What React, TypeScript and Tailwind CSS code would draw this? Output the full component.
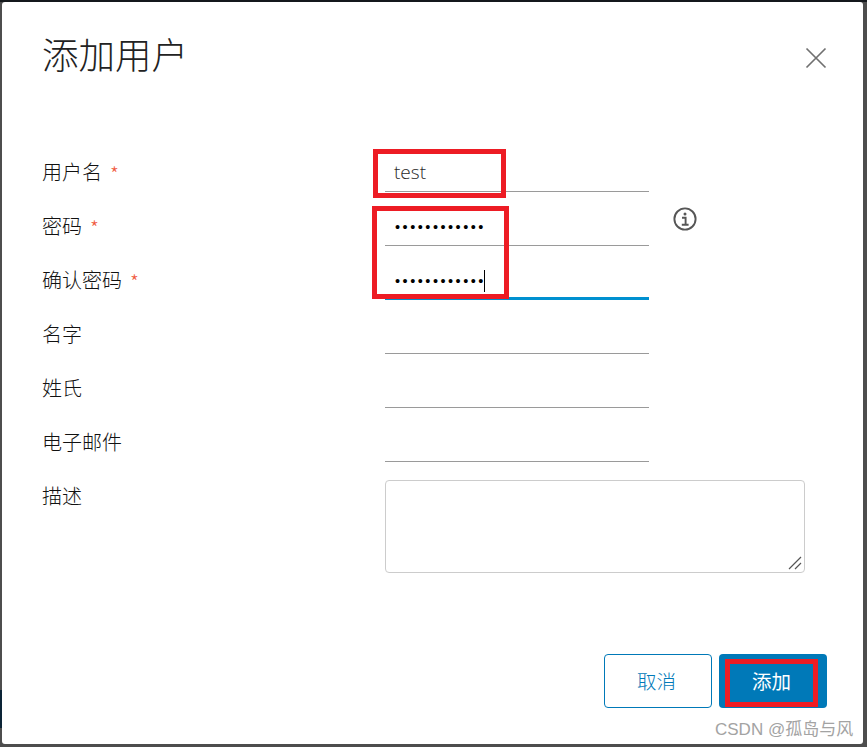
import React from 'react';

const fontStack = { fontFamily: '"Noto Sans CJK SC", "Noto Sans", sans-serif' };

const Field = ({
  label,
  required,
  focused,
  children,
}: {
  label: string;
  required?: boolean;
  focused?: boolean;
  children?: React.ReactNode;
}) => (
  <div className="flex h-[54px] items-start">
    <div className="ml-[-1px] flex w-[343px] pt-[20px] text-[20px] leading-[28px] font-light text-[#111]">
      {label}
      {required && <span className="ml-[8px] mt-[4px] text-[20px] leading-[24px] text-[#f0583c]">*</span>}
    </div>
    <div
      className={
        focused
          ? 'flex h-[54px] w-[264px] items-center border-b-[3px] border-[#0090d0] pl-[9px] pt-[19px]'
          : 'flex h-[54px] w-[264px] items-center border-b border-[#9a9a9a] pl-[9px] pt-[17px]'
      }
    >
      {children}
    </div>
  </div>
);

const Dots = () => (
  <span className="ml-[1px] text-[14.5px] leading-none tracking-[2.5px] text-black" style={{ fontFamily: '"Liberation Sans", sans-serif' }}>
    ••••••••••••
  </span>
);

export default function App() {
  return (
    <div className="relative h-[747px] w-[867px] overflow-hidden border-t-2 border-[#14181c] bg-[#4d4d4d]" style={fontStack}>
      <div className="absolute left-0 top-[688px] h-[38px] w-[2px] bg-[#0c2436]" />

      <div className="relative mx-[2px] flex h-[742px] w-[861px] flex-col rounded-[3px] bg-white pl-[41px]">
        <div className="flex h-[114px] items-start justify-between pr-[35px]">
          <h1 className="ml-[-1px] pt-[26px] text-[36.5px] leading-[52px] font-light text-[#222]">添加用户</h1>
          <svg width="24" height="24" viewBox="0 0 24 24" className="mt-[44px] text-[#707070]" fill="none" stroke="currentColor" strokeWidth="1.7">
            <path d="M2.5 2.5 L21.5 21.5 M21.5 2.5 L2.5 21.5" />
          </svg>
        </div>

        <div className="pt-[22px]">
          <Field label="用户名" required>
            <span className="mt-[-2px] text-[19px] leading-none text-[#2a2a2a]" style={{ fontFamily: '"Open Sans", sans-serif', fontWeight: 300 }}>test</span>
          </Field>
          <div className="flex items-start">
            <Field label="密码" required>
              <Dots />
            </Field>
            <svg width="24" height="24" viewBox="0 0 24 24" className="ml-[24px] mt-[15px] text-[#565656]" fill="none" stroke="currentColor">
              <circle cx="12" cy="12" r="10.6" strokeWidth="1.9" />
              <circle cx="12" cy="7" r="1.5" fill="currentColor" stroke="none" />
              <path d="M9 10.8 H12.6 V17.6 M8.8 17.8 H15.6" strokeWidth="1.9" />
            </svg>
          </div>
          <Field label="确认密码" required focused>
            <Dots />
            <span className="ml-[-2px] h-[22px] w-px bg-black" />
          </Field>
          <Field label="名字" />
          <Field label="姓氏" />
          <Field label="电子邮件" />

          <div className="flex items-start pt-[18px]">
            <div className="ml-[-1px] w-[343px] pt-[2px] text-[20px] leading-[28px] font-light text-[#111]">描述</div>
            <div className="relative h-[93px] w-[420px] rounded-[4px] border border-[#cccccc]">
              <svg width="14" height="14" viewBox="0 0 14 14" className="absolute bottom-[2px] right-[2px] text-[#555]" fill="none" stroke="currentColor" strokeWidth="1.2">
                <path d="M1 13 L13 1 M7 13 L13 7" />
              </svg>
            </div>
          </div>
        </div>

        <div className="mt-[81px] flex justify-end gap-[7px] pr-[36px]">
          <button className="h-[54px] w-[108px] rounded-[4px] border border-[#0079b8] bg-white pr-[3px] text-[19.5px] font-light text-[#0079b8]">取消</button>
          <button className="h-[54px] w-[108px] rounded-[4px] bg-[#0079b8] pr-[3px] text-[19.5px] text-white">添加</button>
        </div>
      </div>

      {/* annotations drawn over the dialog */}
      <div className="absolute left-[373px] top-[147px] h-[49px] w-[133px] border-[5px] border-[#ed1c24]" />
      <div className="absolute left-[372px] top-[204px] h-[93px] w-[137px] border-[5px] border-[#ed1c24]" />
      <div className="absolute left-[725px] top-[657px] h-[48px] w-[93px] border-[5px] border-[#ed1c24]" />
      <div className="absolute left-[715px] top-[716px] text-[17px] leading-[24px] text-[#a3a3a3]" style={{ fontFamily: '"Liberation Sans", "Noto Sans CJK SC", sans-serif' }}>CSDN @孤岛与风</div>
    </div>
  );
}
